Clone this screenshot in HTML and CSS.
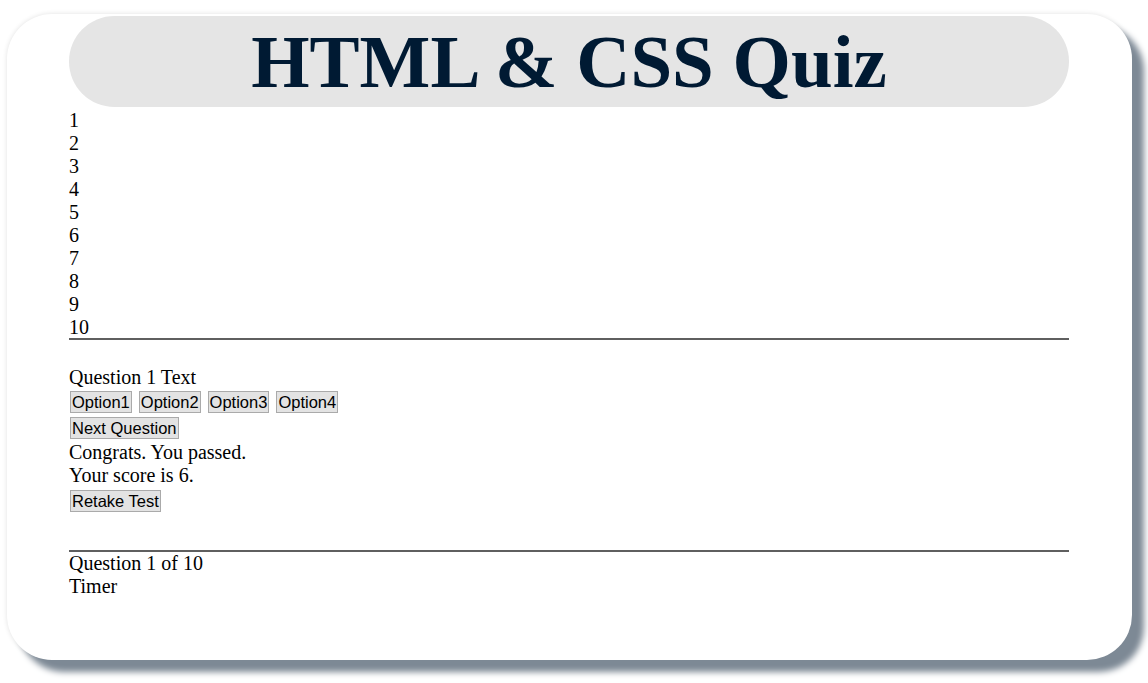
FILE: index.html
```html
<!DOCTYPE html>
<html>
<head>
<meta charset="utf-8">
<link rel="stylesheet" href="styles.css">
</head>
<body>
<div class="card">
  <div class="inner">
    <h1 class="title">HTML &amp; CSS Quiz</h1>
    <ol class="nums">
      <li>1</li><li>2</li><li>3</li><li>4</li><li>5</li><li>6</li><li>7</li><li>8</li><li>9</li><li>10</li>
    </ol>
    <hr class="rule">
    <div class="question">Question 1 Text</div>
    <div class="options">
      <button class="btn">Option1</button>
      <button class="btn">Option2</button>
      <button class="btn">Option3</button>
      <button class="btn">Option4</button>
    </div>
    <div class="row row-next"><button class="btn">Next Question</button></div>
    <div class="line line-first">Congrats. You passed.</div>
    <div class="line">Your score is 6.</div>
    <div class="row row-retake"><button class="btn">Retake Test</button></div>
    <hr class="rule rule-bottom">
    <div class="line">Question 1 of 10</div>
    <div class="line">Timer</div>
  </div>
</div>
</body>
</html>
```

FILE: styles.css
```css
html, body {
  margin: 0;
  padding: 0;
  background: #ffffff;
}
body {
  font-family: "Liberation Serif", "Times New Roman", serif;
  font-size: 20px;
  color: #000;
  padding: 14px 16px 0 7px;
  min-height: 683px;
  box-sizing: border-box;
}
.card {
  background: #fff;
  border-radius: 45px;
  height: 646px;
  box-shadow: 12px 12px 6px #7d8995, 0 0 5px rgba(0,0,0,0.12);
  display: flex;
  justify-content: flex-start;
  padding: 2px 0 0 62px;
  box-sizing: border-box;
}
.inner {
  width: 1000px;
}
.title {
  margin: 0;
  height: 91px;
  background: #e5e5e5;
  border-radius: 46px;
  color: #001a33;
  font-size: 75px;
  font-weight: bold;
  text-align: center;
  line-height: 91px;
}
.nums {
  list-style: none;
  margin: 2px 0 0 0;
  padding: 0;
  line-height: 23px;
}
.rule {
  margin: 0;
  border: 0;
  border-top: 2px solid #5f5f5f;
  height: 0;
}
.nums + .rule {
  margin-top: -1px;
}
.question {
  margin-top: 26px;
  line-height: 23px;
}
.options {
  display: flex;
  gap: 7px;
  margin-top: 2px;
  margin-left: 1px;
}
.row {
  display: flex;
  margin-left: 1px;
}
.row-next {
  margin-top: 4px;
}
.row-retake {
  margin-top: 3px;
}
.btn {
  font-family: "Liberation Sans", Arial, sans-serif;
  font-size: 16.5px;
  line-height: 18px;
  padding: 1px 1px;
  background: #e3e3e3;
  border: 1px solid #aaaaaa;
  border-radius: 0;
  color: #000;
  margin: 0;
}
.line {
  line-height: 23px;
}
.line-first {
  margin-top: 2px;
}
.rule-bottom {
  margin-top: 38px;
}
```
